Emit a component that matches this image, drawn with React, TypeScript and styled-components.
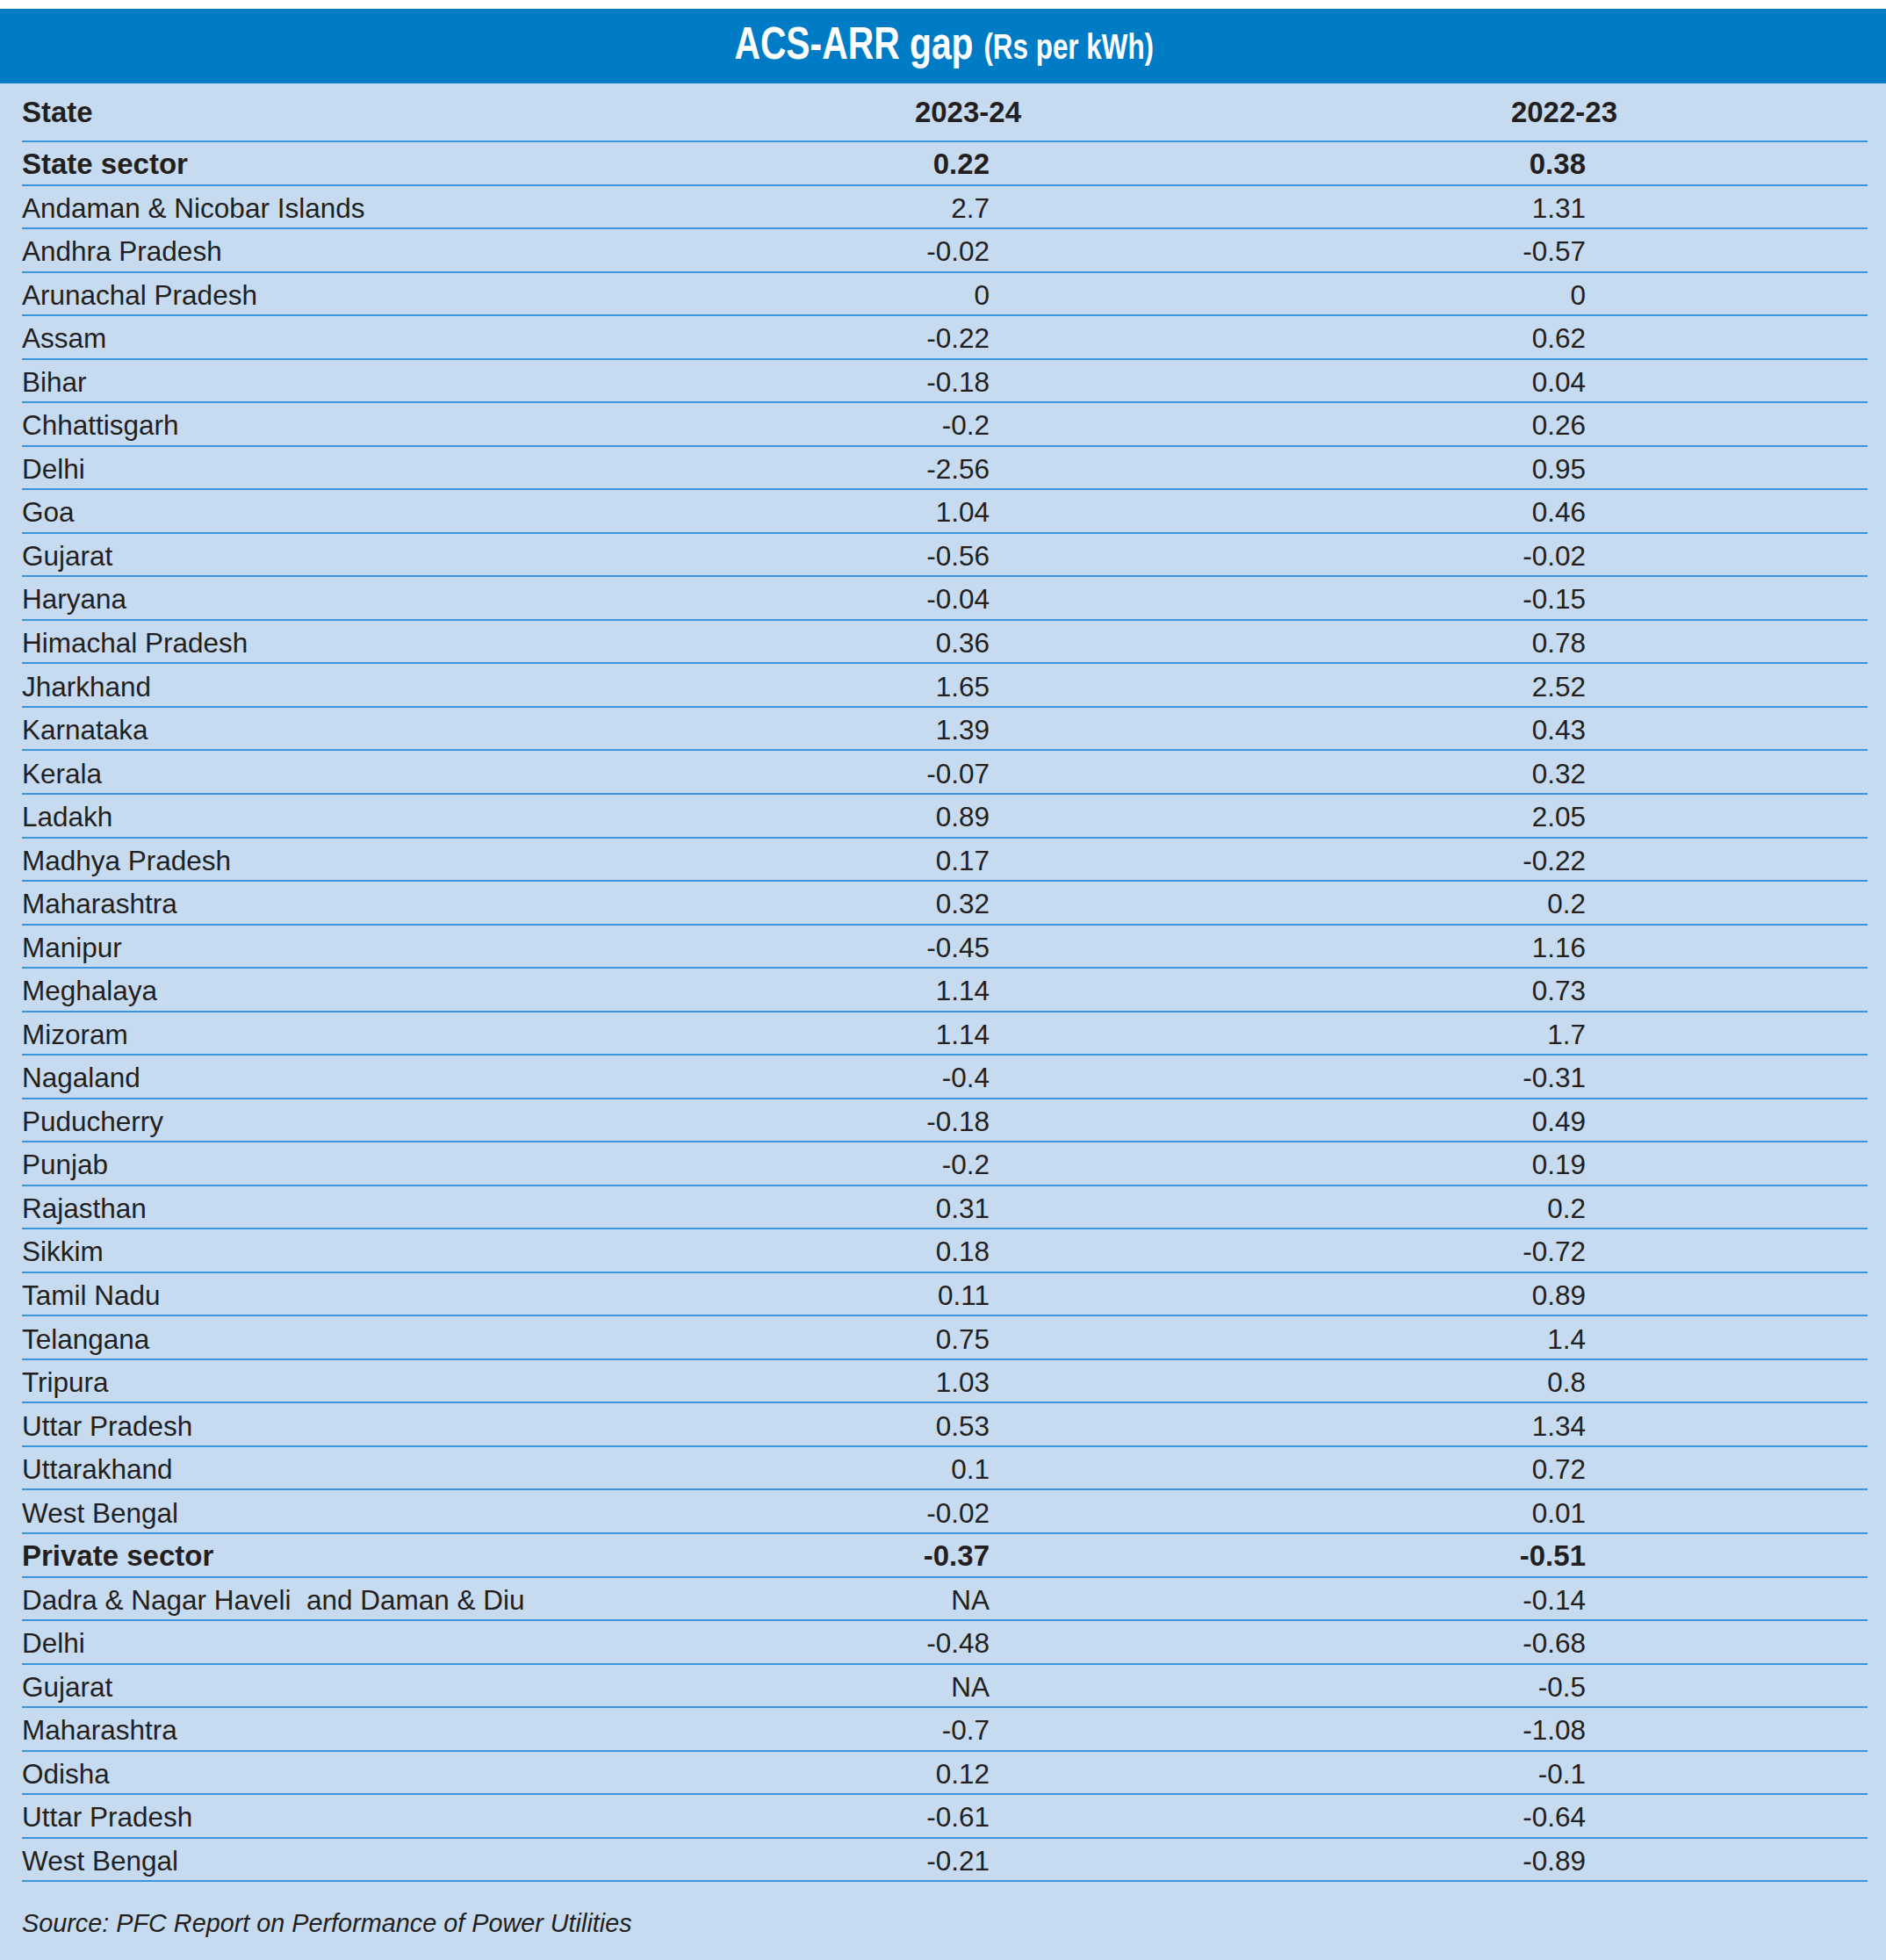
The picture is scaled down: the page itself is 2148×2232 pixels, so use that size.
import React from "react";
import styled, { createGlobalStyle } from "styled-components";

const GlobalStyle = createGlobalStyle`
  html, body {
    margin: 0;
    padding: 0;
    background: #ffffff;
  }
  body {
    font-family: "Liberation Sans", Arial, sans-serif;
    color: #231f20;
  }
`;

const Page = styled.div`
  width: 2148px;
  height: 2232px;
  padding-top: 10px;
  box-sizing: border-box;
  background: #ffffff;
  display: flex;
  flex-direction: column;
`;

const Panel = styled.div`
  flex: 1;
  display: flex;
  flex-direction: column;
  background: #c7dbf0;
`;

const TitleBar = styled.header`
  height: 85px;
  box-sizing: border-box;
  padding: 0 0 6px 2px;
  background: #007cc6;
  display: flex;
  align-items: center;
  justify-content: center;
`;

const Title = styled.h1`
  margin: 0;
  display: inline-block;
  transform: scaleX(0.785);
  transform-origin: center;
  color: #ffffff;
  font-family: "Liberation Sans", Arial, sans-serif;
  font-weight: 700;
  font-size: 52px;
  line-height: 1.1;
  white-space: nowrap;
`;

const TitleUnit = styled.span`
  font-size: 40px;
  font-weight: 700;
  margin-left: 4px;
`;

const Table = styled.div`
  margin: 0 21px 0 25px;
  display: flex;
  flex-direction: column;
`;

type RowKind = "head" | "sector" | "item";

const Row = styled.div<{ $kind: RowKind }>`
  display: grid;
  grid-template-columns: 675px 463px 679px 285px;
  align-items: center;
  height: ${(p) => (p.$kind === "head" ? "67px" : "49.54px")};
  box-sizing: border-box;
  border-bottom: 2px solid #3a96dc;
  font-size: ${(p) => (p.$kind === "item" ? "31.5px" : "33px")};
  font-weight: ${(p) => (p.$kind === "item" ? 400 : 700)};
  color: #231f20;
  padding-top: ${(p) => (p.$kind === "head" ? "1px" : "3px")};
`;

const NameCell = styled.div`
  white-space: pre;
  line-height: 1.15;
`;

const ValueCell = styled.div<{ $head?: boolean }>`
  text-align: right;
  line-height: 1.15;
  padding-right: ${(p) => (p.$head ? "0" : "36px")};
  white-space: nowrap;
`;

const Footer = styled.footer`
  padding: 30px 0 0 25px;
  font-size: 28.8px;
  line-height: 34px;
  font-style: italic;
  color: #231f20;
`;

type Entry = { name: string; a: string; b: string; kind: "sector" | "item" };

const rows: Entry[] = [
  { name: "State sector", a: "0.22", b: "0.38", kind: "sector" },
  { name: "Andaman & Nicobar Islands", a: "2.7", b: "1.31", kind: "item" },
  { name: "Andhra Pradesh", a: "-0.02", b: "-0.57", kind: "item" },
  { name: "Arunachal Pradesh", a: "0", b: "0", kind: "item" },
  { name: "Assam", a: "-0.22", b: "0.62", kind: "item" },
  { name: "Bihar", a: "-0.18", b: "0.04", kind: "item" },
  { name: "Chhattisgarh", a: "-0.2", b: "0.26", kind: "item" },
  { name: "Delhi", a: "-2.56", b: "0.95", kind: "item" },
  { name: "Goa", a: "1.04", b: "0.46", kind: "item" },
  { name: "Gujarat", a: "-0.56", b: "-0.02", kind: "item" },
  { name: "Haryana", a: "-0.04", b: "-0.15", kind: "item" },
  { name: "Himachal Pradesh", a: "0.36", b: "0.78", kind: "item" },
  { name: "Jharkhand", a: "1.65", b: "2.52", kind: "item" },
  { name: "Karnataka", a: "1.39", b: "0.43", kind: "item" },
  { name: "Kerala", a: "-0.07", b: "0.32", kind: "item" },
  { name: "Ladakh", a: "0.89", b: "2.05", kind: "item" },
  { name: "Madhya Pradesh", a: "0.17", b: "-0.22", kind: "item" },
  { name: "Maharashtra", a: "0.32", b: "0.2", kind: "item" },
  { name: "Manipur", a: "-0.45", b: "1.16", kind: "item" },
  { name: "Meghalaya", a: "1.14", b: "0.73", kind: "item" },
  { name: "Mizoram", a: "1.14", b: "1.7", kind: "item" },
  { name: "Nagaland", a: "-0.4", b: "-0.31", kind: "item" },
  { name: "Puducherry", a: "-0.18", b: "0.49", kind: "item" },
  { name: "Punjab", a: "-0.2", b: "0.19", kind: "item" },
  { name: "Rajasthan", a: "0.31", b: "0.2", kind: "item" },
  { name: "Sikkim", a: "0.18", b: "-0.72", kind: "item" },
  { name: "Tamil Nadu", a: "0.11", b: "0.89", kind: "item" },
  { name: "Telangana", a: "0.75", b: "1.4", kind: "item" },
  { name: "Tripura", a: "1.03", b: "0.8", kind: "item" },
  { name: "Uttar Pradesh", a: "0.53", b: "1.34", kind: "item" },
  { name: "Uttarakhand", a: "0.1", b: "0.72", kind: "item" },
  { name: "West Bengal", a: "-0.02", b: "0.01", kind: "item" },
  { name: "Private sector", a: "-0.37", b: "-0.51", kind: "sector" },
  { name: "Dadra & Nagar Haveli  and Daman & Diu", a: "NA", b: "-0.14", kind: "item" },
  { name: "Delhi", a: "-0.48", b: "-0.68", kind: "item" },
  { name: "Gujarat", a: "NA", b: "-0.5", kind: "item" },
  { name: "Maharashtra", a: "-0.7", b: "-1.08", kind: "item" },
  { name: "Odisha", a: "0.12", b: "-0.1", kind: "item" },
  { name: "Uttar Pradesh", a: "-0.61", b: "-0.64", kind: "item" },
  { name: "West Bengal", a: "-0.21", b: "-0.89", kind: "item" },
];

export default function App() {
  return (
    <>
      <GlobalStyle />
      <Page>
        <Panel>
          <TitleBar>
            <Title>
              ACS-ARR gap<TitleUnit> (Rs per kWh)</TitleUnit>
            </Title>
          </TitleBar>
          <Table>
            <Row $kind="head">
              <NameCell>State</NameCell>
              <ValueCell $head>2023-24</ValueCell>
              <ValueCell $head>2022-23</ValueCell>
              <div />
            </Row>
            {rows.map((r, i) => (
              <Row key={i} $kind={r.kind}>
                <NameCell>{r.name}</NameCell>
                <ValueCell>{r.a}</ValueCell>
                <ValueCell>{r.b}</ValueCell>
                <div />
              </Row>
            ))}
          </Table>
          <Footer>Source: PFC Report on Performance of Power Utilities</Footer>
        </Panel>
      </Page>
    </>
  );
}
